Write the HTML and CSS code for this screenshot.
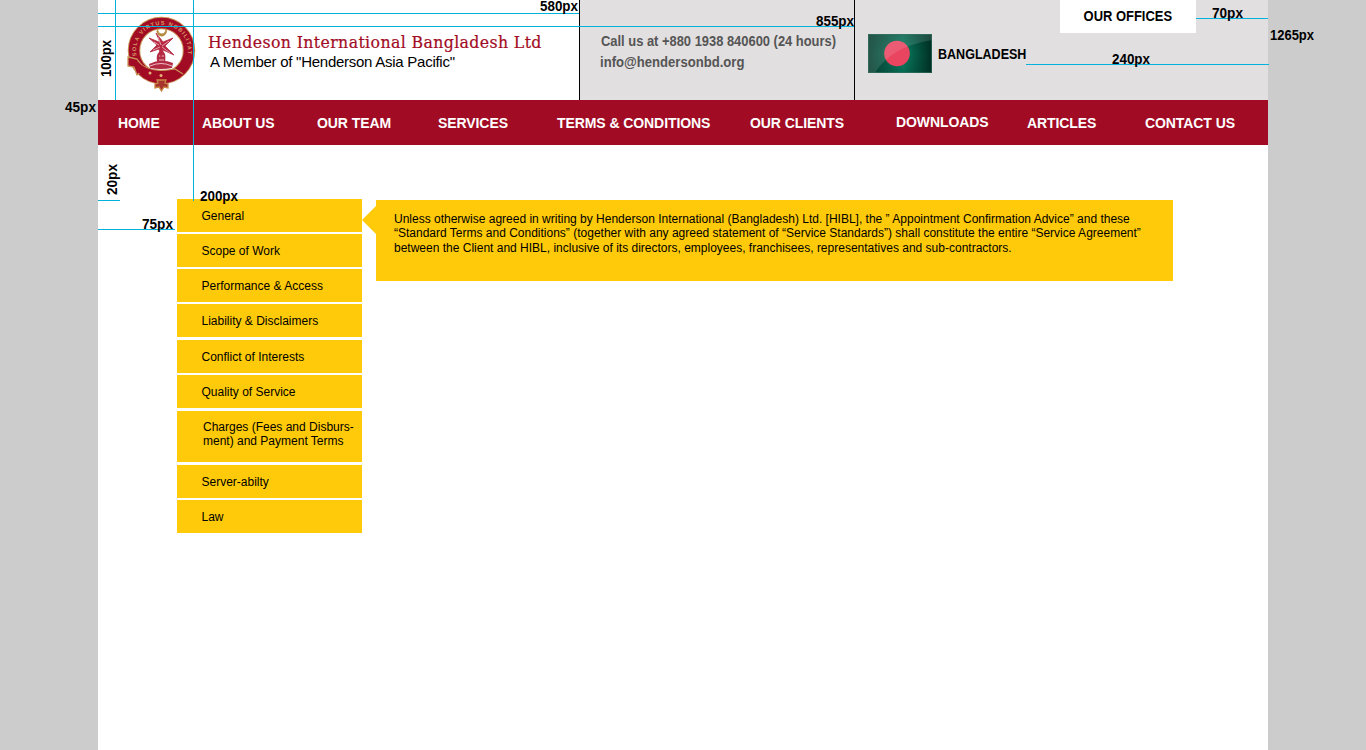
FILE: index.html
```html
<!DOCTYPE html>
<html lang="en">
<head>
<meta charset="utf-8">
<title>Hendeson International Bangladesh Ltd</title>
<link rel="stylesheet" href="styles.css">
</head>
<body>
<div class="page">
  <header class="header">
    <div class="brand">
      <svg class="logo" width="70" height="80" viewBox="0 0 70 80">
        <defs><path id="arc" d="M10 45A26 26 0 1 1 60 45"/></defs>
        <circle cx="34.500" cy="37.500" r="27.500" fill="none" stroke="#c9965a" stroke-width="12.500"/>
        <circle cx="34.500" cy="37.500" r="27.500" fill="none" stroke="#a20b24" stroke-width="10.500"/>
        <text class="motto"><textPath href="#arc" startOffset="2" textLength="90">SOLA VIRTUS NOBILITAT</textPath></text>
        <path d="M1 44l9 2 7 10-7 6-3-8-6-1z" fill="#a20b24" stroke="#c9965a" stroke-width="1.300"/>
        <path d="M11 48q10 13 37 8l8 6-11 5q-21 4-34-8" fill="#a20b24"/>
        <path d="M11 48q10 13 37 8l8 5" fill="none" stroke="#c9965a" stroke-width="1.200"/>
        <path d="M22 51q12-6 24-1l-1 5q-11 2-22 0z" fill="#b32b43"/>
        <path d="M23 53q11-5 22 0" fill="none" stroke="#eebcc4"/>
        <path d="M34.500 37c-6 4-5 8-4 13h8c-1-5 2-9-4-13z" fill="#b32b43"/>
        <path d="M32 43h5m-5 4h5" stroke="#eebcc4"/>
        <path d="M34.500 33L29 20l7 9 10-4-8 8 9 9-11-5-2 7-2-8-9 3 7-7-8-7 10 4z" fill="#b82a43" stroke="#b82a43" stroke-width=".8"/>
        <path d="M34 32l-3-8m4 9l7-5m-7 6l8 6m-10-6l-7 3m6-5l-5-3" stroke="#f4cbd2" stroke-width=".7"/>
        <path d="M31 15.500a4.700 4.700 0 1 0 7.500 0 4 4 0 1 1-7.500 0z" fill="#b38a3e" stroke="#b38a3e" stroke-width=".8"/>
        <circle cx="23" cy="60" r="1.500" fill="#e5b479"/><circle cx="34" cy="62.500" r="1.500" fill="#e5b479"/>
        <path d="M30 67h9l-1 3 3 1v4l-4-1-2.500 4-2.500-4-4 1v-4l3-1z" fill="#a7342d" stroke="#c98543" stroke-width="1.300"/>
      </svg>
      <div class="names">
        <div class="company">Hendeson International Bangladesh Ltd</div>
        <div class="member">A Member of "Henderson Asia Pacific"</div>
      </div>
    </div>
    <div class="contact">
      <div class="phone">Call us at +880 1938 840600 (24 hours)</div>
      <div class="mail">info@hendersonbd.org</div>
    </div>
    <div class="region">
      <div class="country">
        <svg width="64" height="39" viewBox="0 0 64 39">
          <defs>
            <linearGradient id="green"><stop offset="0" stop-color="#073e30"/><stop offset=".55" stop-color="#087e62"/><stop offset="1" stop-color="#002d22"/></linearGradient>
            <linearGradient id="shade" x2="0" y2="1"><stop offset="0" stop-color="#003326" stop-opacity=".35"/><stop offset=".5" stop-color="#003326" stop-opacity="0"/><stop offset="1" stop-color="#003326" stop-opacity=".25"/></linearGradient>
          </defs>
          <path fill="url(#green)" d="M0 0h64v39H0z"/>
          <path fill="url(#shade)" d="M0 0h64v39H0z"/>
          <circle cx="29" cy="19.500" r="12.800" fill="#e94560"/>
          <path d="M0 0h64v6Q22 13 7 39H0z" fill="#fff" opacity=".12"/>
          <path d="M.5.5h63v38H.5z" fill="none" stroke="#3d7465" stroke-opacity=".6"/>
        </svg>
        <span class="country-name">BANGLADESH</span>
      </div>
      <div class="offices"><span>OUR OFFICES</span></div>
    </div>
  </header>
  <nav class="nav">
    <a>HOME</a><a>ABOUT US</a><a>OUR TEAM</a><a>SERVICES</a><a>TERMS &amp; CONDITIONS</a><a>OUR CLIENTS</a><a class="raised">DOWNLOADS</a><a>ARTICLES</a><a>CONTACT US</a>
  </nav>
  <main class="main">
    <div class="menu">
      <div class="item">General</div>
      <div class="item">Scope of Work</div>
      <div class="item">Performance &amp; Access</div>
      <div class="item wide-gap">Liability &amp; Disclaimers</div>
      <div class="item">Conflict of Interests</div>
      <div class="item wide-gap">Quality of Service</div>
      <div class="item tall wide-gap">Charges (Fees and Disburs-<br>ment) and Payment Terms</div>
      <div class="item">Server-abilty</div>
      <div class="item">Law</div>
    </div>
    <svg class="arrow" width="14" height="28" viewBox="0 0 14 28"><path d="M14 0v28L0 14z" fill="#ffca0a"/></svg>
    <div class="panel">
      <div>Unless otherwise agreed in writing by Henderson International (Bangladesh) Ltd. [HIBL], the ” Appointment Confirmation Advice” and these</div>
      <div>“Standard Terms and Conditions” (together with any agreed statement of “Service Standards”) shall constitute the entire “Service Agreement”</div>
      <div>between the Client and HIBL, inclusive of its directors, employees, franchisees, representatives and sub-contractors.</div>
    </div>
  </main>
</div>
<svg class="measures" width="1366" height="750" viewBox="0 0 1366 750">
  <g class="guides">
    <path d="M98 13.500h481M98 26.500h756M1196 18.500h72M1026 64.500h243M98 200.500h22M98 229.500h77M115.500 0v100M193.500 0v201"/>
  </g>
  <g class="labels">
    <text x="540" y="11" textLength="38" lengthAdjust="spacingAndGlyphs">580px</text>
    <text x="816" y="26" textLength="38" lengthAdjust="spacingAndGlyphs">855px</text>
    <text x="1212" y="18" textLength="31" lengthAdjust="spacingAndGlyphs">70px</text>
    <text x="1270" y="40" textLength="44" lengthAdjust="spacingAndGlyphs">1265px</text>
    <text x="1112" y="64" textLength="38" lengthAdjust="spacingAndGlyphs">240px</text>
    <text x="65" y="112" textLength="31" lengthAdjust="spacingAndGlyphs">45px</text>
    <text x="200" y="201" textLength="38" lengthAdjust="spacingAndGlyphs">200px</text>
    <text x="142" y="229" textLength="31" lengthAdjust="spacingAndGlyphs">75px</text>
    <text transform="translate(111 77) rotate(-90)" textLength="37" lengthAdjust="spacingAndGlyphs">100px</text>
    <text transform="translate(117 195) rotate(-90)" textLength="31" lengthAdjust="spacingAndGlyphs">20px</text>
  </g>
</svg>
</body>
</html>
```
FILE: styles.css
```css
* { box-sizing: border-box; }
body {
  margin: 0;
  height: 750px;
  overflow: hidden;
  background: #ccc;
  font-family: "Liberation Sans", Arial, sans-serif;
  color: #000;
}
.page { width: 1170px; height: 750px; margin-left: 98px; background: #fff; }
.header { display: flex; height: 100px; white-space: nowrap; }
.brand { display: flex; width: 481px; padding: 13px 0 0 29px; }
.logo { flex: none; }
.motto { font: bold 5.5px "Liberation Sans", sans-serif; fill: #d79a66; }
.names { padding: 19px 0 0 11px; }
.company {
  font: 17.5px/21px "DejaVu Serif Condensed", "DejaVu Serif", serif;
  font-stretch: condensed;
  letter-spacing: 0.38px;
  color: #a20b24;
  -webkit-text-stroke: 0.2px #a20b24;
}
.member { padding-left: 2px; font-size: 15px; line-height: 18px; letter-spacing: -0.26px; }
.contact {
  width: 276px;
  padding: 31px 0 0 20px;
  border: solid #000;
  border-width: 0 1px;
  background: #e1dfe0;
  color: #555;
  font-size: 14px;
  font-weight: bold;
  line-height: 21px;
}
.phone { width: 255px; margin-left: 1px; transform: scaleX(0.922); transform-origin: left; }
.mail { width: 255px; transform: scaleX(0.935); transform-origin: left; }
.region {
  display: flex;
  flex: 1;
  background: #e1dfe0;
  font-size: 14px;
  font-weight: bold;
}
.country { display: flex; width: 205px; padding: 34px 0 0 13px; gap: 6px; line-height: 41px; }
.country svg { flex: none; }
.country-name { transform: scaleX(0.895); transform-origin: left; }
.offices { width: 136px; height: 33px; background: #fff; text-align: center; line-height: 33px; }
.offices span { display: inline-block; transform: scaleX(0.925); }
.nav {
  display: grid;
  grid-template-columns: 84px 115px 121px 119px 193px 146px 131px 118px auto;
  height: 45px;
  padding-left: 20px;
  background: #a20b24;
  color: #fff;
  font-size: 14px;
  font-weight: bold;
  line-height: 46px;
  letter-spacing: -0.08px;
  white-space: nowrap;
}
.nav .raised { line-height: 44px; }
.main { display: flex; align-items: flex-start; padding: 54px 0 0 79px; font-size: 12px; }
.menu { width: 185px; }
.item { height: 33px; margin-bottom: 2px; padding-left: 24.5px; background: #ffca0a; line-height: 34px; }
.item.wide-gap { margin-bottom: 3px; }
.item.tall { height: 51px; padding: 9px 0 0 26px; line-height: 14px; white-space: nowrap; }
.arrow { margin-top: 7px; }
.panel { width: 797px; height: 81px; margin-top: 1px; padding: 12px 0 0 18px; background: #ffca0a; line-height: 14.4px; white-space: nowrap; }
.measures { position: absolute; top: 0; left: 0; }
.guides { fill: none; stroke: #00b2dc; stroke-width: 1; }
.labels { font-size: 14px; font-weight: bold; }
```
